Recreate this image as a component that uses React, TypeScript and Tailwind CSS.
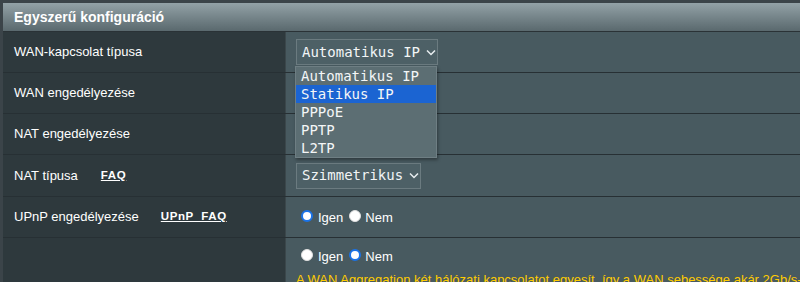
import React from "react";

const sans = { fontFamily: '"Liberation Sans", Arial, sans-serif' };
const mono = { fontFamily: '"DejaVu Sans Mono", monospace' };

function Chevron() {
  return (
    <svg width="10" height="7" viewBox="0 0 10 7" className="ml-[6px]">
      <polyline points="1,1.5 5,5.5 9,1.5" fill="none" stroke="#e8eef0" strokeWidth="1.5" />
    </svg>
  );
}

function Radio({ checked }: { checked: boolean }) {
  return checked ? (
    <span className="inline-block w-[12px] h-[12px] rounded-full bg-white border-[2px] border-[#1a73e8]" />
  ) : (
    <span className="inline-block w-[12px] h-[12px] rounded-full bg-white border border-[#e0e0e0]" />
  );
}

function Row({
  h,
  label,
  children,
}: {
  h: string;
  label: React.ReactNode;
  children?: React.ReactNode;
}) {
  return (
    <div className={`flex ${h} border-b border-[#273034]`}>
      <div className="w-[282px] shrink-0 bg-[#2e393d] flex items-center pl-[11px] text-white text-[13px]">
        {label}
      </div>
      <div className="flex-1 bg-[#485a60] flex items-center pl-[10px] border-l border-[#3b474b]">
        {children}
      </div>
    </div>
  );
}

function Radios({ first }: { first: boolean }) {
  return (
    <div className="flex items-center text-white text-[13px] pl-[5px]">
      <Radio checked={first} />
      <span className="ml-[5px] mt-[4px]">Igen</span>
      <span className="ml-[6px] flex">
        <Radio checked={!first} />
      </span>
      <span className="ml-[4px] mt-[4px]">Nem</span>
    </div>
  );
}

export default function App() {
  return (
    <div className="w-[800px] h-[282px] overflow-hidden bg-[#3b4449]" style={sans}>
      <div className="ml-[3px] mt-[3px] relative">
        <div className="h-[29px] bg-gradient-to-b from-[#93a2a7] to-[#5a696e] flex items-center pl-[11px] border-b border-[#2a3236]">
          <span className="text-white font-bold text-[14px]">Egyszerű konfiguráció</span>
        </div>
        <Row h="h-[41px]" label="WAN-kapcsolat típusa">
          <div
            className="h-[26px] w-[142px] bg-[#4d6066] border border-[#6b7b80] flex items-center pl-[5px] text-[#f2f5f6] text-[14px]"
            style={mono}
          >
            Automatikus IP
            <Chevron />
          </div>
        </Row>
        <Row h="h-[41px]" label="WAN engedélyezése" />
        <Row h="h-[41px]" label="NAT engedélyezése" />
        <Row
          h="h-[42px]"
          label={
            <>
              <span>NAT típusa</span>
              <span className="ml-[23px] underline text-[11.5px] tracking-[0.6px] font-bold">FAQ</span>
            </>
          }
        >
          <div
            className="h-[26px] w-[125px] bg-[#4d6066] border border-[#6b7b80] flex items-center pl-[5px] text-[#f2f5f6] text-[14px]"
            style={mono}
          >
            Szimmetrikus
            <Chevron />
          </div>
        </Row>
        <Row
          h="h-[41px]"
          label={
            <>
              <span>UPnP engedélyezése</span>
              <span className="ml-[22px] underline text-[11.5px] tracking-[0.6px] font-bold whitespace-pre">
                UPnP  FAQ
              </span>
            </>
          }
        >
          <div className="-mt-[2px]">
            <Radios first />
          </div>
        </Row>
        <div className="flex h-[60px]">
          <div className="w-[282px] shrink-0 bg-[#2e393d]" />
          <div className="flex-1 min-w-0 bg-[#485a60] pl-[10px] pt-[5px] border-l border-[#3b474b]">
            <Radios first={false} />
            <div className="text-[#ffcc00] text-[13px] leading-[16px] mt-[5px] whitespace-nowrap">
              A WAN Aggregation két hálózati kapcsolatot egyesít, így a WAN sebessége akár 2Gb/s-
              <br />
              ra nőhet.
            </div>
          </div>
        </div>

        <div
          className="absolute left-[292px] top-[63px] w-[142px] bg-[#5c6e73] border border-[#6e7e83] shadow-[1px_2px_3px_rgba(0,0,0,0.35)] text-[#f4f6f7] text-[14px]"
          style={mono}
        >
          <div className="h-[18px] flex items-center pl-[5px]">Automatikus IP</div>
          <div className="h-[18px] flex items-center pl-[5px] bg-[#1b64d2]">Statikus IP</div>
          <div className="h-[18px] flex items-center pl-[5px]">PPPoE</div>
          <div className="h-[18px] flex items-center pl-[5px]">PPTP</div>
          <div className="h-[18px] flex items-center pl-[5px]">L2TP</div>
        </div>
      </div>
    </div>
  );
}
